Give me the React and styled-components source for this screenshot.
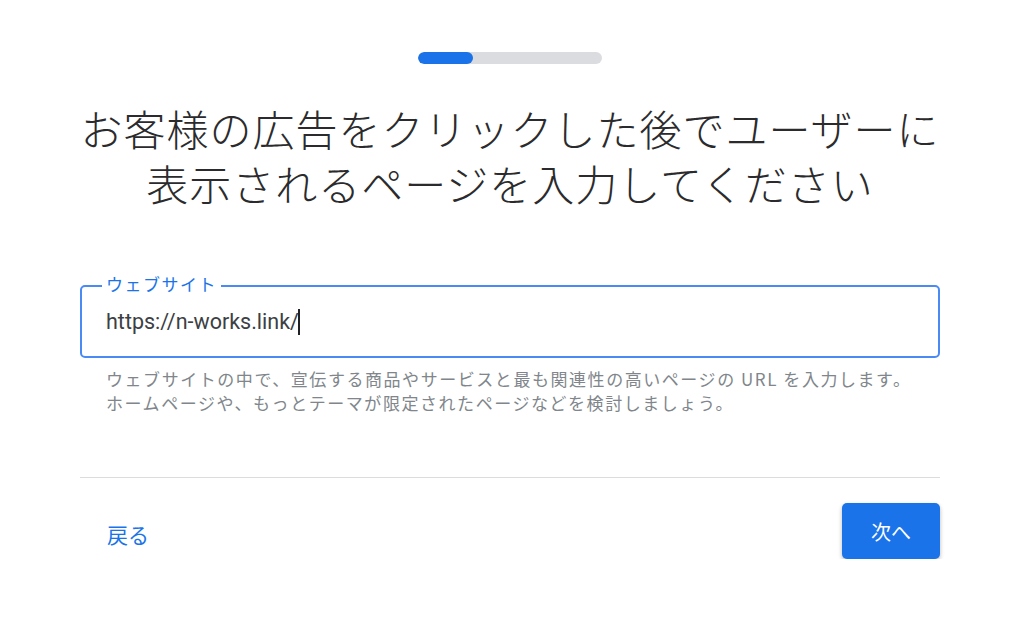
import React from "react";
import styled, { createGlobalStyle } from "styled-components";

const Global = createGlobalStyle`
  html, body { margin: 0; padding: 0; background: #ffffff; }
  body { font-family: Roboto, "Noto Sans CJK JP", sans-serif; }
  * { box-sizing: border-box; }
`;

const Page = styled.main`
  width: 860px;
  margin-left: 80px;
  padding-top: 52px;
  display: flex;
  flex-direction: column;
`;

const Track = styled.div`
  align-self: center;
  width: 184px;
  height: 12px;
  border-radius: 6px;
  background: #dadce0;
  overflow: hidden;
`;

const Fill = styled.div`
  height: 100%;
  border-radius: 6px;
  background: #1a73e8;
`;

const Title = styled.h1`
  margin: 36px 0 0;
  text-align: center;
  font-family: "Noto Sans CJK JP", sans-serif;
  font-weight: 300;
  font-size: 42px;
  line-height: 55px;
  letter-spacing: 1px;
  color: #2b2b2d;
`;

const FieldBox = styled.div`
  position: relative;
  margin-top: 75px;
  height: 73px;
  border: 2px solid #4a8af4;
  border-radius: 5px;
  padding-left: 24px;
  display: flex;
  align-items: center;
`;

const FieldLabel = styled.span`
  position: absolute;
  top: -13px;
  left: 20px;
  padding: 0 4px;
  background: #ffffff;
  font-family: "Noto Sans CJK JP", sans-serif;
  font-size: 17px;
  line-height: 20px;
  letter-spacing: 1.5px;
  color: #1a73e8;
`;

const Value = styled.span`
  font-family: Roboto, sans-serif;
  font-size: 21.5px;
  color: #3c4043;
  display: flex;
  align-items: center;
`;

const Caret = styled.span`
  display: inline-block;
  width: 2px;
  height: 26px;
  margin-left: -1px;
  background: #202124;
`;

const Helper = styled.p`
  margin: 9px 0 0 26px;
  font-family: "Noto Sans CJK JP", sans-serif;
  font-size: 17px;
  line-height: 24px;
  letter-spacing: 1.55px;
  color: #80868b;
`;

const Divider = styled.hr`
  margin: 62px 0 0;
  border: 0;
  height: 1px;
  background: #dadce0;
`;

const Footer = styled.div`
  margin-top: 25px;
  display: flex;
  justify-content: space-between;
  align-items: center;
`;

const BackButton = styled.button`
  border: 0;
  background: transparent;
  padding: 8px 27px;
  font-family: "Noto Sans CJK JP", sans-serif;
  font-size: 21px;
  line-height: 28px;
  color: #1a73e8;
  margin-top: 6px;
`;

const NextButton = styled.button`
  width: 98px;
  height: 56px;
  border: 0;
  border-radius: 5px;
  background: #1a73e8;
  color: #ffffff;
  font-family: "Noto Sans CJK JP", sans-serif;
  font-size: 20px;
  box-shadow: 0 2px 4px rgba(0, 0, 0, 0.28);
`;

export default function App() {
  return (
    <>
      <Global />
      <Page>
        <Track>
          <Fill style={{ width: "30%" }} />
        </Track>
        <Title>
          お客様の広告をクリックした後でユーザーに
          <br />
          表示されるページを入力してください
        </Title>
        <FieldBox>
          <FieldLabel>ウェブサイト</FieldLabel>
          <Value>
            https://n-works.link/
            <Caret />
          </Value>
        </FieldBox>
        <Helper>
          ウェブサイトの中で、宣伝する商品やサービスと最も関連性の高いページの URL を入力します。
          <br />
          ホームページや、もっとテーマが限定されたページなどを検討しましょう。
        </Helper>
        <Divider />
        <Footer>
          <BackButton>戻る</BackButton>
          <NextButton>次へ</NextButton>
        </Footer>
      </Page>
    </>
  );
}
